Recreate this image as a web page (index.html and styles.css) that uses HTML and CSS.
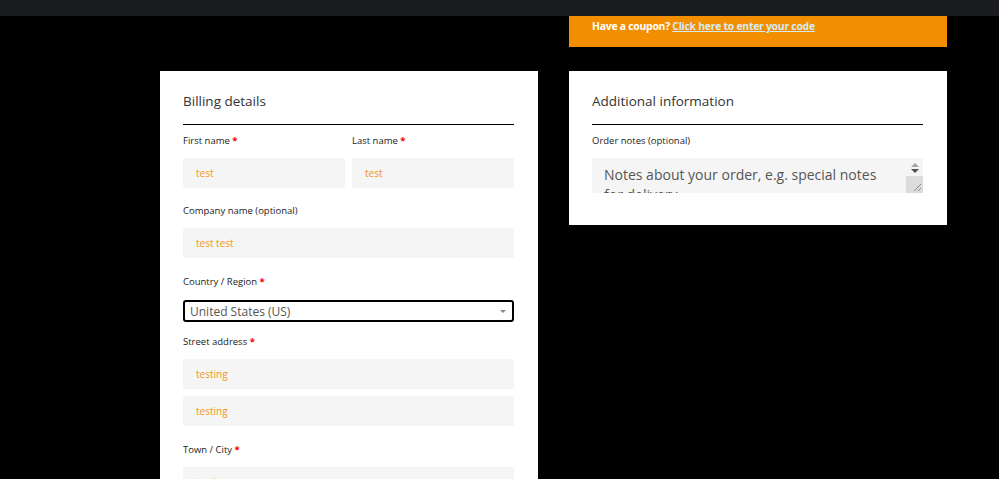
FILE: index.html
```html
<!DOCTYPE html>
<html lang="en">
<head>
<meta charset="utf-8">
<title>Checkout</title>
<link rel="stylesheet" href="styles.css">
</head>
<body>
<div class="topbar"></div>
<main class="checkout">
  <div class="spacer"></div>
  <div class="coupon">Have a coupon? <a href="#">Click here to enter your code</a></div>

  <section class="card billing">
    <h3 class="card-title">Billing details</h3>
    <div class="row">
      <div class="field">
        <label>First name <abbr>*</abbr></label>
        <div class="input">test</div>
      </div>
      <div class="field">
        <label>Last name <abbr>*</abbr></label>
        <div class="input">test</div>
      </div>
    </div>
    <div class="field">
      <label>Company name (optional)</label>
      <div class="input">test test</div>
    </div>
    <div class="field country">
      <label>Country / Region <abbr>*</abbr></label>
      <div class="select"><span>United States (US)</span><span class="arrow"></span></div>
    </div>
    <div class="field">
      <label>Street address <abbr>*</abbr></label>
      <div class="input">testing</div>
      <div class="input second">testing</div>
    </div>
    <div class="field">
      <label>Town / City <abbr>*</abbr></label>
      <div class="input">testing</div>
    </div>
  </section>

  <section class="card additional">
    <h3 class="card-title">Additional information</h3>
    <div class="field">
      <label>Order notes (optional)</label>
      <div class="notes">
        <div class="notes-text">Notes about your order, e.g. special notes for delivery.</div>
        <div class="scroll">
          <div class="sb-up"></div>
          <div class="sb-down"></div>
          <div class="sb-grip">
            <svg width="17" height="17" viewBox="0 0 17 17"><path d="M15 8 L8 15 M15 12 L12 15" stroke="#888" stroke-width="1" fill="none"/></svg>
          </div>
        </div>
      </div>
    </div>
  </section>
</main>
</body>
</html>
```
FILE: styles.css
```css
html, body {
  margin: 0;
  padding: 0;
  background: #000;
  overflow: hidden;
  height: 479px;
}
body {
  font-family: "Open Sans", "Liberation Sans", sans-serif;
}
.topbar {
  height: 16px;
  background: #1b1c20;
}
.checkout {
  display: grid;
  grid-template-columns: 378px 378px;
  column-gap: 31px;
  row-gap: 24px;
  margin-left: 160px;
  align-items: start;
}
.coupon {
  background: #f28e00;
  height: 31px;
  box-sizing: border-box;
  padding: 2px 23px 0;
  font-size: 10.4px;
  font-weight: 700;
  color: #fff;
  line-height: 16px;
  letter-spacing: -0.25px;
}
.coupon a {
  color: #d4ecf5;
  text-decoration: underline;
}
.card {
  background: #fff;
  padding: 21px 24px 0 23px;
}
.billing {
  height: 460px;
}
.additional {
  padding-bottom: 32px;
}
.additional .field {
  margin-bottom: 0;
}
.card-title {
  margin: 0 0 8px;
  font-size: 13.5px;
  font-weight: 500;
  color: #333;
  line-height: 18px;
  padding-bottom: 14px;
  border-bottom: 1px solid #000;
}
.row {
  display: flex;
  gap: 7px;
}
.row .field {
  flex: 1;
  margin-bottom: 15px;
}
.field {
  margin-bottom: 16px;
}
.field label {
  display: block;
  font-size: 9.5px;
  line-height: 16px;
  color: #222;
  margin-bottom: 9px;
}
.field abbr {
  color: #e00;
  text-decoration: none;
  font-weight: 700;
}
.input {
  height: 30px;
  background: #f5f5f5;
  color: #f39619;
  font-size: 10px;
  line-height: 30px;
  padding-left: 13px;
}
.input.second {
  margin-top: 7px;
}
.country {
  margin-bottom: 12px;
}
.country label {
  margin-bottom: 10px;
}
.select {
  height: 22px;
  box-sizing: border-box;
  border: 2px solid #000;
  border-radius: 3px;
  display: flex;
  align-items: center;
  justify-content: space-between;
  padding: 0 6px 0 5px;
  font-size: 12px;
  color: #555;
}
.arrow {
  width: 0;
  height: 0;
  border-left: 3px solid transparent;
  border-right: 3px solid transparent;
  border-top: 3px solid #888;
}
.notes {
  height: 35px;
  background: #f5f5f5;
  display: flex;
  overflow: hidden;
}
.notes-text {
  flex: 1;
  font-size: 14px;
  line-height: 20px;
  color: #555;
  padding: 7px 12px 0;
}
.scroll {
  width: 17px;
  display: flex;
  flex-direction: column;
  background: #f5f5f5;
}
.sb-up, .sb-down {
  height: 6px;
  display: flex;
  justify-content: center;
  align-items: center;
}
.sb-up { margin-top: 4px; }
.sb-up::after {
  content: "";
  border-left: 4px solid transparent;
  border-right: 4px solid transparent;
  border-bottom: 4px solid #a3a3a3;
}
.sb-down::after {
  content: "";
  border-left: 4px solid transparent;
  border-right: 4px solid transparent;
  border-top: 4px solid #505050;
}
.sb-grip {
  flex: 1;
  background: #dcdcdc;
  margin-top: 2px;
  position: relative;
  overflow: hidden;
}
.sb-grip svg {
  position: absolute;
  right: 0;
  bottom: 0;
}
```
